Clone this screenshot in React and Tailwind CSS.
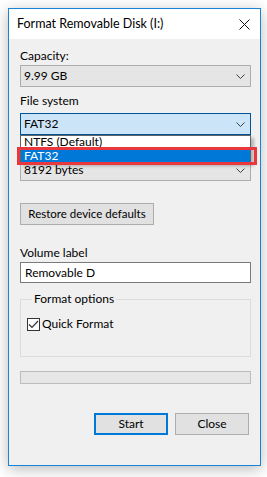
import React from 'react'

function Chevron() {
	return (
		<svg width="9" height="5" viewBox="0 0 9 5" className="shrink-0">
			<polyline points="0.5,0.5 4.5,4.5 8.5,0.5" fill="none" stroke="#404040" strokeWidth="1" />
		</svg>
	)
}

function Combo({ value, focused }) {
	const box = focused
		? 'border-[#005499] bg-[#cce4f7]'
		: 'border-[#adadad] bg-[#e5e5e5]'
	return (
		<div className={`flex h-[22px] w-[231px] items-center justify-between border pl-[3px] pr-[5px] ${box}`}>
			<span className="leading-4">{value}</span>
			<Chevron />
		</div>
	)
}

export default function App() {
	return (
		<div className="h-[477px] w-[267px] overflow-hidden bg-white pl-[8px] pt-[8px] text-[11.5px] text-black" style={{ fontFamily: 'Lato, "Segoe UI", sans-serif' }}>
			<div className="flex h-[458px] w-[253px] flex-col border border-[#1883d7] bg-[#f0f0f0] shadow-[0_3px_14px_rgba(0,0,0,0.28)]">
				{/* title bar */}
				<div className="flex h-[30px] items-center justify-between bg-white pl-[8px] pr-[10px]">
					<span className="text-[12.5px] leading-4">Format Removable Disk (I:)</span>
					<svg width="11" height="11" viewBox="0 0 11 11">
						<path d="M0.5 0.5 L10.5 10.5 M10.5 0.5 L0.5 10.5" stroke="#111" strokeWidth="1" />
					</svg>
				</div>

				<div className="relative flex flex-col pl-[11px] text-[12px]">
					<div className="mt-[9px] leading-4">Capacity:</div>
					<div className="mt-[1px]">
						<Combo value="9.99 GB" />
					</div>

					<div className="mt-[6px] leading-4">File system</div>
					<div className="mt-[4px]">
						<Combo value="FAT32" focused />
					</div>

					<div className="mt-[6px] leading-4">Allocation unit size</div>
					<div className="mt-[2px]">
						<Combo value="8192 bytes" />
					</div>

					<button className="mt-[22px] flex h-[22px] w-[134px] items-center justify-center border border-[#adadad] bg-[#e1e1e1] text-[11.5px] leading-4">
						Restore device defaults
					</button>

					<div className="mt-[20px] leading-4">Volume label</div>
					<div className="mt-[1px] flex h-[21px] w-[231px] items-center border border-[#7a7a7a] bg-white pl-[4px] leading-4">
						Removable D
					</div>

					<fieldset className="mt-[8px] h-[66px] w-[231px] border border-[#dcdcdc] pl-[6px]">
						<legend className="ml-[5px] px-[2px] leading-4">Format options</legend>
						<div className="mt-[9px] flex items-center gap-[2px]">
							<div className="flex h-[13px] w-[13px] items-center justify-center border border-[#333] bg-white">
								<svg width="11" height="9" viewBox="0 0 11 9">
									<polyline points="1,4.5 4,7.5 10,1" fill="none" stroke="#333" strokeWidth="1.2" />
								</svg>
							</div>
							<span className="leading-4">Quick Format</span>
						</div>
					</fieldset>

					<div className="mt-[14px] h-[13px] w-[231px] border border-[#bcbcbc] bg-[#e6e6e6]" />

					<div className="mt-[29px] flex gap-[7px] pl-[74px]">
						<button className="flex h-[22px] w-[74px] items-center justify-center border-2 border-[#0078d7] bg-[#e1e1e1] leading-4">
							Start
						</button>
						<button className="flex h-[22px] w-[74px] items-center justify-center border border-[#adadad] bg-[#e1e1e1] leading-4">
							Close
						</button>
					</div>

					{/* open dropdown list */}
					<div className="absolute left-[11px] top-[96px] w-[231px] border border-[#646464] bg-white shadow-[3px_3px_3px_rgba(0,0,0,0.25)]">
						<div className="flex h-[13px] items-end overflow-hidden pl-[3px] leading-[14px]">NTFS (Default)</div>
						<div className="flex h-[13px] items-center bg-[#0078d7] pl-[3px] leading-[13px] text-white">FAT32</div>
					</div>
					{/* red highlight */}
					<div className="absolute left-[8px] top-[108px] h-[18px] w-[240px] border-[3px] border-[#e8383d]" />
				</div>
			</div>
		</div>
	)
}
